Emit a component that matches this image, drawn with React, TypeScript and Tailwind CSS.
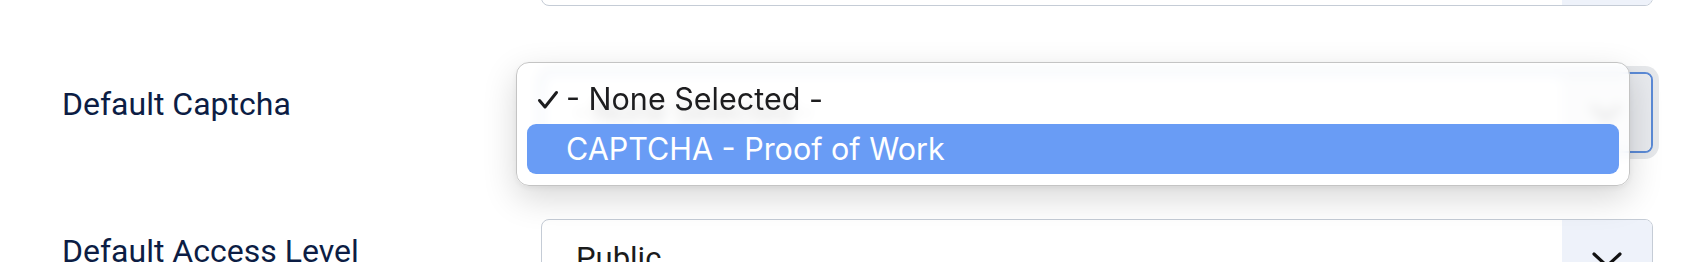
import React from "react";

const Chevron = ({ className = "" }: { className?: string }) => (
  <svg width="30" height="16" viewBox="0 0 30 16" className={className}>
    <path d="M2 2 L15 14 L28 2" fill="none" stroke="currentColor" strokeWidth="3.2" strokeLinecap="round" strokeLinejoin="round" />
  </svg>
);

const Check = () => (
  <svg width="22" height="20" viewBox="0 0 22 20" className="text-[#1d1d1f]">
    <path d="M2.5 10.5 L8 17 L19.5 2.5" fill="none" stroke="currentColor" strokeWidth="3" strokeLinecap="round" strokeLinejoin="round" />
  </svg>
);

function SelectBox({ value, focused }: { value: string; focused?: boolean }) {
  return (
    <div
      className={
        focused
          ? "flex h-[81px] w-[1112px] overflow-hidden rounded-[8px] border-2 border-[#5b8ad6] bg-white shadow-[0_0_0_6px_#e6e8eb]"
          : "flex h-[81px] w-[1112px] overflow-hidden rounded-[8px] border border-[#c5ccd6] bg-white"
      }
    >
      <div className="flex flex-1 items-center pl-[34px] font-['Roboto',sans-serif] text-[31px] text-[#1b1b1b]">
        {value}
      </div>
      <div
        className={
          focused
            ? "flex w-[90px] items-center justify-center bg-[#e8eaee] text-[#111]"
            : "flex w-[90px] items-center justify-center bg-[#eef2fa] text-[#111]"
        }
      >
        <Chevron />
      </div>
    </div>
  );
}

function Row({ label, value, focused, children }: { label: string; value: string; focused?: boolean; children?: React.ReactNode }) {
  return (
    <div className="flex">
      <div className="w-[479px] pt-[10px] font-['Roboto',sans-serif] text-[32px] leading-[45px] text-[#0c1d44]">
        {label}
      </div>
      <div className="relative">
        <SelectBox value={value} focused={focused} />
        {children}
      </div>
    </div>
  );
}

export default function App() {
  return (
    <div className="h-[262px] w-[1706px] overflow-hidden bg-white">
      <div className="mt-[-75px] flex flex-col gap-[66px] pl-[62px]">
        <Row label="" value="" />
        <Row label="Default Captcha" value="- None Selected -" focused>
          <div className="absolute left-[-25px] top-[-10px] z-10 flex h-[124px] w-[1114px] flex-col rounded-[13px] border border-[#c4c4c4] bg-white/85 px-[10px] py-[11px] shadow-[0_12px_34px_rgba(0,0,0,0.16),0_2px_6px_rgba(0,0,0,0.06)] backdrop-blur-[6px]">
            <div className="relative flex h-[51px] items-center pl-[39px] font-['Inter',sans-serif] text-[30.5px] text-[#1d1d1f]">
              <span className="absolute left-[10px] top-[16px]">
                <Check />
              </span>
              - None Selected -
            </div>
            <div className="flex h-[51px] items-center rounded-[9px] bg-[#699cf5] pl-[39px] font-['Inter',sans-serif] text-[30.5px] text-white">
              CAPTCHA - Proof of Work
            </div>
          </div>
        </Row>
        <Row label="Default Access Level" value="Public" />
      </div>
    </div>
  );
}
